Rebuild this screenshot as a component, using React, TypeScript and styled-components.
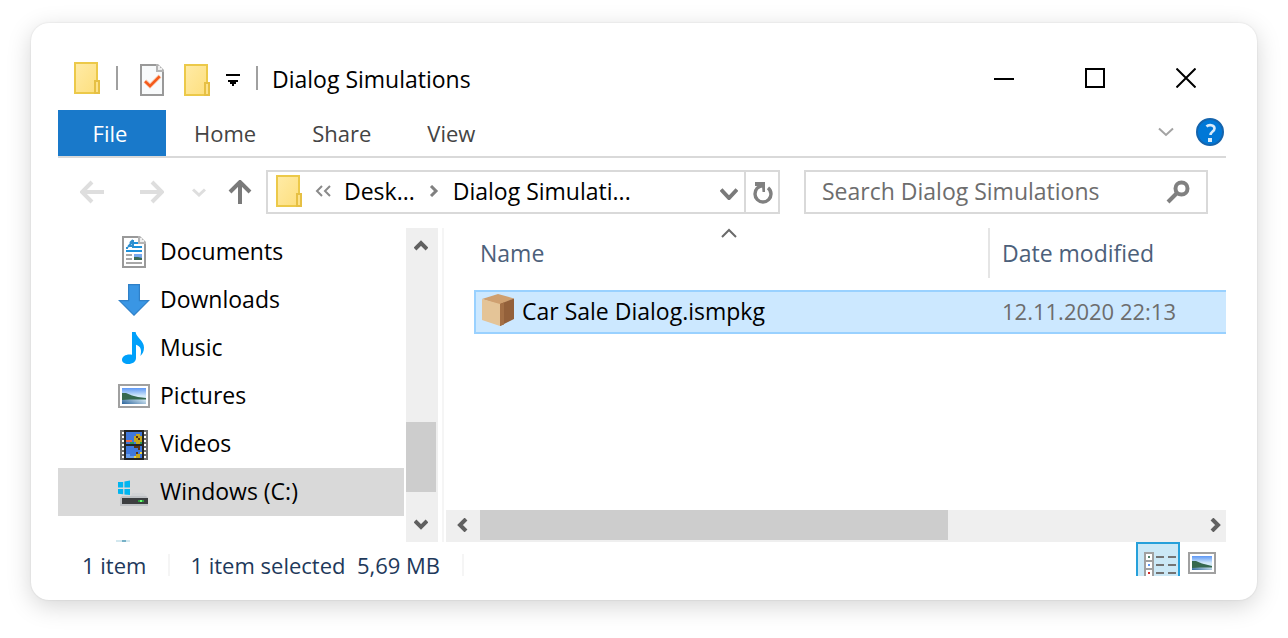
import React from "react";
import styled, { createGlobalStyle } from "styled-components";

const GlobalStyle = createGlobalStyle`
  *, *::before, *::after { box-sizing: border-box; }
  body {
    margin: 0;
    background: #fff;
    color: #000;
    font-family: "Open Sans", "Noto Sans", sans-serif;
    font-size: 23px;
    line-height: 32px;
  }
  button, input { font: inherit; color: inherit; }
  svg { display: block; flex: none; }
`;

const Page = styled.main`
  padding: 23px 31px 38px;
`;

const Window = styled.section`
  padding: 23px 31px 24px 27px;
  background: #fff;
  border-radius: 18px;
  box-shadow: 0 0 2px rgba(0, 0, 0, 0.12), 0 6px 24px rgba(0, 0, 0, 0.17);
`;

const PlainButton = styled.button`
  display: flex;
  align-items: center;
  justify-content: center;
  flex: none;
  padding: 0;
  border: 0;
  background: none;
`;

const TitleBar = styled.header`
  display: flex;
  align-items: center;
  height: 64px;
  padding-left: 16px;
`;

const QuickAccess = styled.div`
  display: flex;
  align-items: center;
  gap: 16px;
  padding: 4px 16px 0 22px;
`;

const QuickButton = styled(PlainButton)`
  min-width: 14px;
  height: 32px;
`;

const TaskButton = styled(QuickButton)`
  width: 28px;
  justify-content: flex-start;
`;

const TitleDivider = styled.span`
  width: 2px;
  height: 24px;
  background: #a0a0a0;
`;

const LeadingDivider = styled(TitleDivider)`
  margin-left: 16px;
`;

const Title = styled.h1`
  flex: 1;
  margin: 0;
  padding: 2px 0 0 14px;
  font-size: 23px;
  font-weight: 400;
  white-space: nowrap;
`;

const WindowControls = styled.div`
  display: flex;
  gap: 11px;
`;

const ControlButton = styled(PlainButton)`
  width: 80px;
  height: 40px;
`;

const Ribbon = styled.nav`
  display: flex;
  align-items: stretch;
  height: 48px;
  border-bottom: 2px solid #d9d9d9;
`;

const Tab = styled.button<{ $primary?: boolean }>`
  width: ${(p) => (p.$primary ? "108px" : "auto")};
  padding: 0 ${(p) => (p.$primary ? "4px 0 0" : "28px")};
  border: 0;
  background: ${(p) => (p.$primary ? "#1979ca" : "none")};
  color: ${(p) => (p.$primary ? "#fff" : "#444")};
  font-size: 22px;
`;

const RibbonTools = styled.div`
  display: flex;
  align-items: center;
  gap: 22px;
  margin-left: auto;
  padding: 0 2px 2px 0;
`;

const AddressRow = styled.div`
  display: flex;
  align-items: stretch;
  height: 44px;
  margin: 12px 18px 14px 0;
`;

const History = styled.div`
  display: flex;
  align-items: center;
  gap: 22px;
  padding: 0 14px 0 22px;
`;

const HistoryForward = styled(PlainButton)`
  margin: 0 6px 0 14px;
`;

const AddressBox = styled.div`
  display: flex;
  align-items: stretch;
  flex: 514 1 514px;
  min-width: 0;
  border: 2px solid #d9d9d9;
`;

const Crumbs = styled.div`
  display: flex;
  align-items: center;
  flex: 1;
  min-width: 0;
  gap: 13px;
  padding: 0 4px 2px 8px;
`;

const Crumb = styled.a`
  overflow: hidden;
  color: #000;
  text-decoration: none;
  white-space: nowrap;
`;

const AddressDrop = styled(PlainButton)`
  width: 30px;
  padding-top: 4px;
`;

const Refresh = styled(PlainButton)`
  width: 34px;
  padding-left: 2px;
  border-left: 2px solid #d9d9d9;
`;

const SearchBox = styled.label`
  display: flex;
  align-items: center;
  flex: 404 1 404px;
  min-width: 0;
  margin-left: 24px;
  padding: 0 16px;
  border: 2px solid #d9d9d9;
`;

const SearchInput = styled.input`
  flex: 1;
  min-width: 0;
  height: 32px;
  padding: 0 0 2px;
  border: 0;
  outline: 0;
  background: none;
  &::placeholder { color: #6d6d6d; opacity: 1; }
`;

const Body = styled.div`
  display: flex;
  height: 314px;
`;

const Tree = styled.ul`
  width: 346px;
  flex: none;
  margin: 0 2px 0 0;
  padding: 0;
  overflow: hidden;
  list-style: none;
`;

const TreeItem = styled.li<{ $selected?: boolean }>`
  background: ${(p) => (p.$selected ? "#d9d9d9" : "none")};
`;

const TreeLink = styled.a`
  display: flex;
  align-items: center;
  gap: 10px;
  height: 48px;
  padding-left: 60px;
  color: #000;
  text-decoration: none;
`;

const ItemLabel = styled.span`
  padding-bottom: 2px;
`;

const PartialItem = styled.li`
  display: flex;
  align-items: flex-end;
  height: 26px;
  padding-left: 58px;
`;

const VerticalBar = styled.div`
  display: flex;
  flex-direction: column;
  flex: none;
  width: 32px;
  padding-right: 2px;
  background: #efefef;
`;

const HorizontalBar = styled.div`
  display: flex;
  height: 32px;
  margin-top: auto;
  padding-bottom: 2px;
  background: #efefef;
`;

const ScrollButton = styled(PlainButton)`
  width: 30px;
  height: 34px;
`;

const SideScrollButton = styled(PlainButton)<{ $end?: boolean }>`
  justify-content: ${(p) => (p.$end ? "flex-end" : "flex-start")};
  width: 34px;
  height: 30px;
  padding: 0 ${(p) => (p.$end ? "3px" : "9px")};
`;

const Track = styled.div<{ $grow: number; $thumb?: boolean }>`
  flex: ${(p) => p.$grow} 1 0;
  background: ${(p) => (p.$thumb ? "#cdcdcd" : "none")};
`;

const FilePane = styled.div`
  display: flex;
  flex-direction: column;
  flex: 1;
  min-width: 0;
  margin-left: 4px;
  padding-left: 2px;
  border-left: 2px solid #f5f5f5;
`;

const TableArea = styled.div`
  padding-left: 28px;
`;

const FileTable = styled.table`
  width: 100%;
  table-layout: fixed;
  border-collapse: separate;
  border-spacing: 0;
`;

const HeadCell = styled.th<{ $width?: string }>`
  position: relative;
  width: ${(p) => p.$width || "auto"};
  height: 62px;
  padding: 0 0 12px;
  color: #4c607a;
  font-weight: 400;
  text-align: left;
`;

const HeadLabel = styled.div<{ $divided?: boolean }>`
  display: flex;
  align-items: center;
  height: 50px;
  padding-left: ${(p) => (p.$divided ? "12px" : "6px")};
  border-left: ${(p) => (p.$divided ? "2px solid #e5e5e5" : "0")};
`;

const SortMark = styled.span`
  position: absolute;
  top: 0;
  left: 50%;
  margin-left: -10px;
`;

const FileCell = styled.td<{ $first?: boolean }>`
  height: 44px;
  padding: 0 0 ${(p) => (p.$first ? "0 6px" : "2px 14px")};
  border: 2px solid #99d1ff;
  border-width: 2px 0 2px ${(p) => (p.$first ? "2px" : "0")};
  background: #cce8ff;
  color: ${(p) => (p.$first ? "#000" : "#6d6d6d")};
  font-size: ${(p) => (p.$first ? "23px" : "22px")};
`;

const FileName = styled.span`
  display: flex;
  align-items: center;
  gap: 8px;
`;

const PackageSlot = styled.span`
  padding-bottom: 4px;
`;

const StatusBar = styled.footer`
  display: flex;
  align-items: flex-end;
  height: 34px;
  padding: 0 10px 0 24px;
  color: #1e395b;
  font-size: 22px;
`;

const StatusText = styled.span`
  height: 22px;
  line-height: 22px;
  padding-right: 22px;
  margin-right: 20px;
  border-right: 2px solid #f5f5f5;
  white-space: pre;
`;

const ViewButtons = styled.div`
  display: flex;
  gap: 8px;
  align-self: stretch;
  margin-left: auto;
`;

const ViewButton = styled(PlainButton)<{ $active?: boolean }>`
  align-items: flex-start;
  width: ${(p) => (p.$active ? "44px" : "28px")};
  height: 34px;
  padding: ${(p) => (p.$active ? "8px 0 0 4px" : "10px 0 0")};
  border: ${(p) => (p.$active ? "2px solid #26a0da" : "0")};
  border-bottom: 0;
  background: ${(p) => (p.$active ? "#cbe8f6" : "none")};
`;

const FolderIcon = () => (
  <svg width="26" height="32" viewBox="0 0 13 16" aria-hidden="true">
    <defs>
      <linearGradient id="folder" x1="0" y1="0" x2="1" y2="1">
        <stop offset="0" stopColor="#ffeba6" />
        <stop offset="1" stopColor="#fddf7e" />
      </linearGradient>
    </defs>
    <rect x=".5" y=".5" width="11" height="15" fill="url(#folder)" stroke="#ecc949" />
    <path d="M10.5 15.5v-6h2v6z" fill="#fde28a" stroke="#e6c044" />
    <path d="M11.5 10v5" stroke="#fde28a" />
  </svg>
);

const PageShape = ({ fill }: { fill: string }) => (
  <>
    <path d="M.5.5h8l3 3v12H.5z" fill={fill} stroke="#999" />
    <path d="M8 0h1l3 3v1H8z" fill="#b4b4b4" />
    <path d="M9 1h1v1h1v1H9z" fill="#eee" />
  </>
);

const TaskIcon = () => (
  <svg width="24" height="32" viewBox="0 0 12 16" aria-hidden="true">
    <PageShape fill="#f8fafb" />
    <path d="M2.5 8.5 5 11l5-5" fill="none" stroke="#fac0a0" strokeWidth="2" />
    <path d="M2.5 8.7 5 11l4.800-4.800" fill="none" stroke="#f4591a" strokeWidth="1.200" />
  </svg>
);

const CustomizeIcon = () => (
  <svg width="14" height="12" viewBox="0 0 7 6" shapeRendering="crispEdges" aria-hidden="true">
    <path d="M0 0h7v1H0zM1 3h5v1H5v1H4v1H3V5H2V4H1z" />
  </svg>
);

const DocumentIcon = () => (
  <svg width="32" height="32" viewBox="-2 0 16 16" aria-hidden="true">
    <PageShape fill="#fff" />
    <path d="M2 6h1M3 5h3M4 3.500 5.500 2M5.500 2v4M3 5.500l2.500-3" stroke="#2d8fd0" fill="none" />
    <path d="M6 3.500h2M6 5.500h4M2 7.500h8" stroke="#1e91db" />
    <path d="M2 9.500h3M2 11.500h3M2 13.500h8" stroke="#a8a8a8" />
    <path d="M6 9h4v2H6z" fill="#78a9ee" />
    <path d="M6 10.500h2l2 .5v1H6z" fill="#3a6955" />
  </svg>
);

const DownloadIcon = () => (
  <svg width="32" height="32" viewBox="0 0 16 16" aria-hidden="true">
    <path d="M5.300.3h5.400v8h4.600L8 15.600.7 8.300h4.600z" fill="#3a96e4" stroke="#2f80c8" strokeWidth=".6" />
  </svg>
);

const MusicIcon = () => (
  <svg width="32" height="32" viewBox="0 0 16 16" aria-hidden="true">
    <path d="M7 0h1.800c.3 2.800 4.200 4.200 4.200 7.800 0 1.900-.7 3.200-1.800 4.200.7-2.800.4-4.700-2.200-5.600V13c0 1.900-1.700 3-3.900 3C3.200 16 2 15.200 2 13.900c0-1.600 1.700-2.700 3.700-2.700.5 0 .9.100 1.300.2z" fill="#00a0fa" />
  </svg>
);

const Landscape = ({ w, h }: { w: number; h: number }) => (
  <>
    <defs>
      <linearGradient id="sky" x1="0" y1="0" x2="0" y2="1">
        <stop offset="0" stopColor="#5d97f5" />
        <stop offset=".5" stopColor="#d4eafa" />
      </linearGradient>
      <linearGradient id="lake" x1="0" y1="1" x2="1" y2=".4">
        <stop offset="0" stopColor="#2c659b" />
        <stop offset="1" stopColor="#cfe4f1" />
      </linearGradient>
    </defs>
    <rect x=".5" y=".5" width={w - 1} height={h - 1} fill="#fff" stroke="#a0a0a0" />
    <rect x="2" y="2" width={w - 4} height={h - 4} fill="url(#sky)" />
    <path d={`M2 7h${w - 4}v${h - 9}H2z`} fill="url(#lake)" />
    <path d={`M2 4.500h2l3 1.200 3 .8 ${w - 12} .5v.8H6L2 8z`} fill="#35684f" />
  </>
);

const PictureIcon = () => (
  <svg width="32" height="32" viewBox="0 -2 16 16" aria-hidden="true">
    <Landscape w={16} h={12} />
  </svg>
);

const VideoIcon = () => (
  <svg width="32" height="32" viewBox="-1 0 16 16" aria-hidden="true">
    <g shapeRendering="crispEdges">
      <path d="M0 1h14v15H0z" fill="#6e6e6e" />
      <path d="M2 1h10v15H2z" fill="#242424" />
      <path d="M3 2h8v6H3zM3 9h8v6H3z" fill="#4078dc" />
      <path d="M1 2h1v1H1zM1 4h1v1H1zM1 6h1v1H1zM1 8h1v1H1zM1 10h1v1H1zM1 12h1v1H1zM1 14h1v1H1zM12 2h1v1h-1zM12 4h1v1h-1zM12 6h1v1h-1zM12 8h1v1h-1zM12 10h1v1h-1zM12 12h1v1h-1zM12 14h1v1h-1z" fill="#fff" />
      <path d="M8 3h2v1h1v3h-1v1H8V7H7V4h1zM8 13h2v2H8z" fill="#c5a51d" />
      <path d="M3 6h3v1H3z" fill="#e8684a" />
      <path d="M5 7h2v1H5zM10 7h1v1h-1z" fill="#2c9a57" />
      <path d="M8 4h1v1H8zM9 5h1v1H9zM7 9h3v1H7zM9 10h1v1H9zM8 12h1v1H8z" fill="#5b3210" />
      <path d="M3 13h2v1h2v1H3z" fill="#6ba0ee" />
      <path d="M7 14h1v1H7zM10 12h1v1h-1z" fill="#ecd34a" />
    </g>
  </svg>
);

const DriveIcon = () => (
  <svg width="32" height="32" viewBox="0 -1 16 16" aria-hidden="true">
    <path d="M0 2h2.600v2.800H0zM3.200 1.800 6 1.200v3.600H3.200zM0 5.500h2.600v2.600L0 7.900zM3.200 5.500H6v3l-2.800-.3z" fill="#00b5f0" />
    <path d="M7 7.500h5.500L15 9.500H2V9h4.500z" fill="#d2d4d6" />
    <path d="M2 9h12l1 1v4H1v-4z" fill="#bfc2c5" />
    <path d="M2 10h13v3H2z" fill="#3c3e40" />
    <path d="M10 11h3v1h-3z" fill="#2c9c3c" />
    <path d="M11 11h1v1h-1z" fill="#6cff72" />
  </svg>
);

const NetworkTopIcon = () => (
  <svg width="14" height="2" viewBox="0 0 7 1" shapeRendering="crispEdges" aria-hidden="true">
    <path d="M0 0h7v1H0z" fill="#d3e8ef" />
    <path d="M3 0h2v1H3z" fill="#77b1c7" />
  </svg>
);

const PackageIcon = () => (
  <svg width="32" height="32" viewBox="0 0 16 16" aria-hidden="true">
    <path d="M0 2.500 8 0l8 2.200L9 5.500z" fill="#cfa070" />
    <path d="M0 2.500 9 5v11L0 13z" fill="#e4c497" />
    <path d="M9 5l7-2.800v10.300L9 16z" fill="#93603a" />
    <path d="M9 5l2-.8v11L9 16z" fill="#a36f45" />
  </svg>
);

type Direction = "up" | "down" | "left" | "right";
const turns: Record<Direction, number> = { up: 0, right: 90, down: 180, left: 270 };

const ScrollArrow = ({ to }: { to: Direction }) => (
  <svg width="14" height="14" viewBox="0 0 14 14" aria-hidden="true">
    <path d="M1 11 7 5l6 6" transform={`rotate(${turns[to]} 7 7)`} fill="none" stroke="#606060" strokeWidth="4" />
  </svg>
);

const Chevron = ({ width, height, color, weight }: { width: number; height: number; color: string; weight: number }) => (
  <svg width={width} height={height} viewBox={`0 0 ${width} ${height}`} aria-hidden="true">
    <path d={`M1 1.500 ${width / 2} ${height - 2}l${width / 2 - 1}-${height - 3.5}`} fill="none" stroke={color} strokeWidth={weight} />
  </svg>
);

const Arrow = ({ turn, color }: { turn: number; color: string }) => (
  <svg width="24" height="24" viewBox="0 0 24 24" aria-hidden="true">
    <path d="M2 12h22M12 2 2 12l10 10" transform={`rotate(${turn} 12 12)`} fill="none" stroke={color} strokeWidth="4" />
  </svg>
);

const DetailsIcon = () => (
  <svg width="32" height="24" viewBox="0 0 16 12" shapeRendering="crispEdges" aria-hidden="true">
    <path d="M0 0h5v12H0z" fill="#a0a0a0" />
    <path d="M1 1h3v3H1zM1 5h3v3H1zM1 9h3v3H1z" fill="#fff" />
    <path d="M2 2h1v1H2z" fill="#4f8068" />
    <path d="M2 6h1v1H2z" fill="#5b97f5" />
    <path d="M2 10h1v1H2z" fill="#d02a2a" />
    <path d="M6 2h4v1H6zM12 2h4v1h-4zM6 6h4v1H6zM12 6h4v1h-4zM6 10h4v1H6zM12 10h4v1h-4z" fill="#737373" />
  </svg>
);

const folders = [
  { name: "Documents", icon: <DocumentIcon /> },
  { name: "Downloads", icon: <DownloadIcon /> },
  { name: "Music", icon: <MusicIcon /> },
  { name: "Pictures", icon: <PictureIcon /> },
  { name: "Videos", icon: <VideoIcon /> },
  { name: "Windows (C:)", icon: <DriveIcon />, selected: true },
];

export default function App() {
  return (
    <>
      <GlobalStyle />
      <Page>
        <Window>
          <TitleBar>
            <FolderIcon />
            <LeadingDivider />
            <QuickAccess>
              <TaskButton aria-label="Properties"><TaskIcon /></TaskButton>
              <QuickButton aria-label="New folder"><FolderIcon /></QuickButton>
              <QuickButton aria-label="Customize toolbar"><CustomizeIcon /></QuickButton>
            </QuickAccess>
            <TitleDivider />
            <Title>Dialog Simulations</Title>
            <WindowControls>
              <ControlButton aria-label="Minimize">
                <svg width="20" height="20" viewBox="0 0 20 20"><path d="M0 11h20" stroke="#000" strokeWidth="2" /></svg>
              </ControlButton>
              <ControlButton aria-label="Maximize">
                <svg width="20" height="20" viewBox="0 0 20 20"><path d="M1 1h18v18H1z" fill="none" stroke="#000" strokeWidth="2" /></svg>
              </ControlButton>
              <ControlButton aria-label="Close">
                <svg width="20" height="20" viewBox="0 0 20 20"><path d="m.5.5 19 19m0-19-19 19" stroke="#000" strokeWidth="2" /></svg>
              </ControlButton>
            </WindowControls>
          </TitleBar>

          <Ribbon aria-label="Ribbon">
            <Tab $primary>File</Tab>
            <Tab>Home</Tab>
            <Tab>Share</Tab>
            <Tab>View</Tab>
            <RibbonTools>
              <PlainButton aria-label="Expand ribbon"><Chevron width={16} height={10} color="#a3a3a3" weight={2} /></PlainButton>
              <PlainButton aria-label="Help">
                <svg width="28" height="28" viewBox="0 0 28 28">
                  <circle cx="14" cy="14" r="13" fill="#0078d7" stroke="#1464ad" strokeWidth="2" />
                  <path d="M10.500 8.500c2-2 8-2 8 2 0 3-4 3-4 6.500" fill="none" stroke="#d8ebfa" strokeWidth="2.600" />
                  <path d="M12 20h4v4h-4z" fill="#d8ebfa" />
                </svg>
              </PlainButton>
            </RibbonTools>
          </Ribbon>

          <AddressRow>
            <History>
              <PlainButton aria-label="Back"><Arrow turn={0} color="#dedede" /></PlainButton>
              <HistoryForward aria-label="Forward"><Arrow turn={180} color="#dedede" /></HistoryForward>
              <PlainButton aria-label="Recent locations"><Chevron width={14} height={9} color="#dedede" weight={3} /></PlainButton>
              <PlainButton aria-label="Up"><Arrow turn={90} color="#7a7a7a" /></PlainButton>
            </History>
            <AddressBox>
              <Crumbs>
                <FolderIcon />
                <svg width="16" height="12" viewBox="0 0 16 12" aria-hidden="true">
                  <path d="M7 1 2 6l5 5M15 1l-5 5 5 5" fill="none" stroke="#8a8a8a" strokeWidth="2" />
                </svg>
                <Crumb href="#desktop">Desk...</Crumb>
                <svg width="12" height="12" viewBox="0 0 12 12" aria-hidden="true">
                  <path d="m3 1 5 5-5 5" fill="none" stroke="#808080" strokeWidth="3" />
                </svg>
                <Crumb href="#dialog-simulations">Dialog Simulati...</Crumb>
              </Crumbs>
              <AddressDrop aria-label="Previous locations"><Chevron width={18} height={12} color="#7a7a7a" weight={4} /></AddressDrop>
              <Refresh aria-label="Refresh">
                <svg width="20" height="24" viewBox="0 0 20 24">
                  <path d="M10.500 5.500C5 6 2 9.500 2 14a8 8 0 0 0 16 0c0-2.500-1-4.600-3-6.200" fill="none" stroke="#808080" strokeWidth="3.400" />
                  <path d="M2 2h10v10H9.500L9 6H2z" fill="#808080" />
                </svg>
              </Refresh>
            </AddressBox>
            <SearchBox>
              <SearchInput type="text" aria-label="Search" placeholder="Search Dialog Simulations" />
              <svg width="24" height="24" viewBox="0 0 24 24" aria-hidden="true">
                <circle cx="15.500" cy="8.500" r="6" fill="none" stroke="#808080" strokeWidth="4" />
                <path d="M11 13 2 22" stroke="#808080" strokeWidth="4" />
              </svg>
            </SearchBox>
          </AddressRow>

          <Body>
            <Tree>
              {folders.map((f) => (
                <TreeItem key={f.name} $selected={f.selected}>
                  <TreeLink href="#folder">{f.icon}<ItemLabel>{f.name}</ItemLabel></TreeLink>
                </TreeItem>
              ))}
              <PartialItem><NetworkTopIcon /></PartialItem>
            </Tree>
            <VerticalBar>
              <ScrollButton aria-label="Scroll up"><ScrollArrow to="up" /></ScrollButton>
              <Track $grow={160} />
              <Track $grow={70} $thumb />
              <Track $grow={16} />
              <ScrollButton aria-label="Scroll down"><ScrollArrow to="down" /></ScrollButton>
            </VerticalBar>
            <FilePane>
              <TableArea>
                <FileTable>
                  <thead>
                    <tr>
                      <HeadCell scope="col">
                        <HeadLabel>Name</HeadLabel>
                        <SortMark>
                          <svg width="16" height="10" viewBox="0 0 16 10" aria-hidden="true">
                            <path d="m1 9 7-7 7 7" fill="none" stroke="#6a6a6a" strokeWidth="2" />
                          </svg>
                        </SortMark>
                      </HeadCell>
                      <HeadCell scope="col" $width="238px"><HeadLabel $divided>Date modified</HeadLabel></HeadCell>
                    </tr>
                  </thead>
                  <tbody>
                    <tr>
                      <FileCell $first>
                        <FileName>
                          <PackageSlot><PackageIcon /></PackageSlot>
                          <ItemLabel>Car Sale Dialog.ismpkg</ItemLabel>
                        </FileName>
                      </FileCell>
                      <FileCell>12.11.2020 22:13</FileCell>
                    </tr>
                  </tbody>
                </FileTable>
              </TableArea>
              <HorizontalBar>
                <SideScrollButton aria-label="Scroll left"><ScrollArrow to="left" /></SideScrollButton>
                <Track $grow={468} $thumb />
                <Track $grow={244} />
                <SideScrollButton $end aria-label="Scroll right"><ScrollArrow to="right" /></SideScrollButton>
              </HorizontalBar>
            </FilePane>
          </Body>

          <StatusBar>
            <StatusText>1 item</StatusText>
            <StatusText>1 item selected  5,69 MB</StatusText>
            <ViewButtons>
              <ViewButton $active aria-label="Details view"><DetailsIcon /></ViewButton>
              <ViewButton aria-label="Large icons view">
                <svg width="28" height="22" viewBox="0 0 14 11" aria-hidden="true"><Landscape w={14} h={11} /></svg>
              </ViewButton>
            </ViewButtons>
          </StatusBar>
        </Window>
      </Page>
    </>
  );
}
